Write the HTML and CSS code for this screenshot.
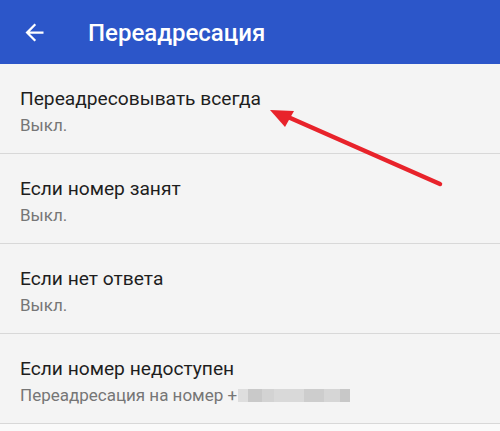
FILE: index.html
```html
<!DOCTYPE html>
<html lang="ru">
<head>
<meta charset="utf-8">
<link rel="stylesheet" href="styles.css">
</head>
<body>
<div class="page">
  <header class="appbar">
    <svg class="back" viewBox="0 0 24 24" width="27" height="27"><path fill="#fff" d="M20 11H7.83l5.59-5.59L12 4l-8 8 8 8 1.41-1.41L7.83 13H20v-2z"/></svg>
    <h1 class="title">Переадресация</h1>
  </header>
  <ul class="list">
    <li class="row">
      <div class="row-title">Переадресовывать всегда</div>
      <div class="row-sub">Выкл.</div>
    </li>
    <li class="row">
      <div class="row-title">Если номер занят</div>
      <div class="row-sub">Выкл.</div>
    </li>
    <li class="row">
      <div class="row-title">Если нет ответа</div>
      <div class="row-sub">Выкл.</div>
    </li>
    <li class="row">
      <div class="row-title">Если номер недоступен</div>
      <div class="row-sub">Переадресация на номер +<span class="blur"><i class="b1"></i><i class="b2"></i><i class="b3"></i><i class="b4"></i><i class="b5"></i><i class="b6"></i><i class="b7"></i></span></div>
    </li>
  </ul>
  <svg class="pointer" viewBox="0 0 500 431" width="500" height="431">
    <line x1="440" y1="184" x2="288" y2="117" stroke="#e8232b" stroke-width="4.5" stroke-linecap="round"/>
    <polygon points="270,110 294,111 285,127" fill="#e8232b"/>
  </svg>
</div>
</body>
</html>
```
FILE: styles.css
```css
* { box-sizing: border-box; }
html, body { margin: 0; padding: 0; }
body {
  width: 500px;
  height: 431px;
  overflow: hidden;
  background: #fafafa;
  font-family: Roboto, "Noto Sans", sans-serif;
}
.page { position: relative; width: 500px; height: 431px; }
.appbar {
  height: 64px;
  background: #2c56c9;
  display: flex;
  align-items: center;
}
.back { margin-left: 21px; flex: none; display: block; }
.title {
  margin: 1px 0 0 40px;
  color: #fff;
  font-size: 24px;
  line-height: 28px;
  font-weight: 500;
}
.list { list-style: none; margin: 0; padding: 0; background: #f4f4f4; }
.row {
  height: 90px;
  padding: 23px 0 0 20px;
  border-bottom: 1px solid #d8d8d8;
}
.row:first-child { height: 90px; }
.row-title {
  font-size: 19.2px;
  line-height: 24px;
  color: #1e1e1e;
}
.row-sub {
  margin-top: 4px;
  font-size: 17px;
  line-height: 20px;
  color: #767676;
  display: flex;
  align-items: center;
}
.blur { display: inline-flex; align-items: center; margin-left: 1px; }
.blur i { display: block; height: 13px; }
.b1 { width: 10px; background: #dedede; }
.b2 { width: 14px; background: #c9c9c9; }
.b3 { width: 12px; background: #d3d3d3; }
.b4 { width: 30px; background: #d9d9d9; }
.b5 { width: 20px; background: #cdcdcd; }
.b6 { width: 16px; background: #d6d6d6; }
.b7 { width: 10px; background: #c8c8c8; }
.pointer { position: absolute; left: 0; top: 0; pointer-events: none; }
```
